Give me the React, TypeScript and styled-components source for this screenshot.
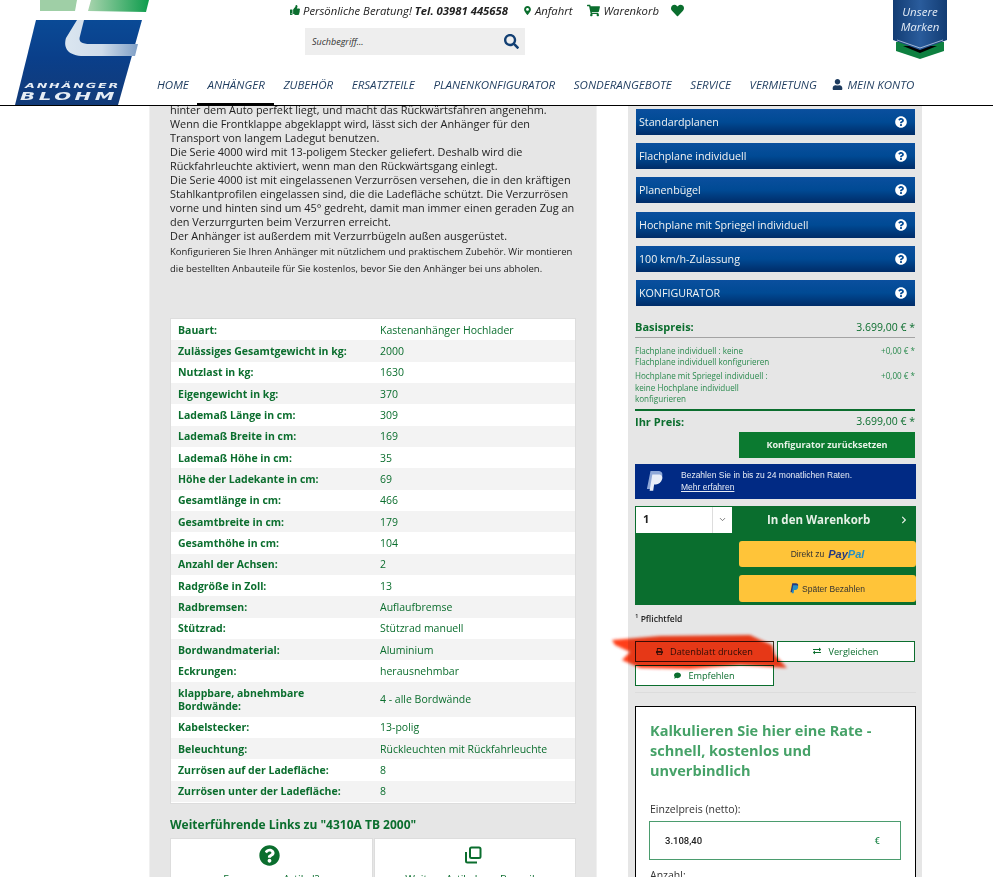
import React from "react";
import styled, { createGlobalStyle } from "styled-components";
import {
  FaChevronRight,
  FaComment,
  FaExchangeAlt,
  FaHeart,
  FaMapMarkerAlt,
  FaPrint,
  FaQuestionCircle,
  FaSearch,
  FaShoppingCart,
  FaThumbsUp,
  FaUser,
} from "react-icons/fa";
import { FiChevronDown } from "react-icons/fi";

const GREEN = "#0b6e2e";
const NAVY = "#1d3b5e";

const GlobalStyle = createGlobalStyle`
  html, body {
    margin: 0;
    padding: 0;
    background: #fff;
    font-family: "Open Sans", "Liberation Sans", sans-serif;
  }
  * { box-sizing: border-box; }
`;

const Page = styled.div`
  height: 877px;
  overflow: hidden;
`;

const Header = styled.header`
  position: relative;
  z-index: 2;
  display: flex;
  height: 106px;
  background: #fff;
  border-bottom: 1px solid #000;
`;

const LogoBox = styled.div`
  flex: 0 0 157px;
  height: 105px;
`;

const HeaderMain = styled.div`
  display: flex;
  flex-direction: column;
  flex: 1;
`;

const TopBar = styled.div`
  display: flex;
  align-items: center;
  height: 20px;
  margin-left: 133px;
  font-size: 11.3px;
  font-style: italic;
  color: #222;
  svg { color: ${GREEN}; }
`;

const TopItem = styled.span<{ $gap?: number }>`
  display: flex;
  align-items: center;
  gap: 3px;
  margin-right: ${(p) => p.$gap ?? 12}px;
  white-space: nowrap;
`;

const SearchBox = styled.div`
  display: flex;
  align-items: center;
  justify-content: space-between;
  width: 220px;
  height: 27px;
  margin: 8px 0 0 148px;
  padding: 0 6px 0 7px;
  background: #eee;
  font-size: 9px;
  font-style: italic;
  color: #333;
  svg { color: #123f73; }
`;

const Nav = styled.nav`
  display: flex;
  gap: 18.6px;
  height: 50px;
  align-items: stretch;
`;

const NavItem = styled.a<{ $active?: boolean }>`
  position: relative;
  display: flex;
  align-items: center;
  gap: 4px;
  height: 50px;
  padding-top: 8px;
  font-size: 11.55px;
  font-style: italic;
  color: ${NAVY};
  white-space: nowrap;
  &:last-child { margin-left: -3px; }
  ${(p) =>
    p.$active &&
    `&::after {
      content: "";
      position: absolute;
      left: -10px;
      right: -9px;
      bottom: 0;
      height: 2px;
      background: #000;
    }`}
`;

const Ribbon = styled.div`
  position: absolute;
  top: 0;
  left: 893px;
  width: 54px;
  height: 59px;
`;

const RibbonShape = styled.svg`
  position: absolute;
  inset: 0;
`;

const RibbonText = styled.div`
  position: relative;
  padding-top: 4px;
  color: #e4ecf6;
  font-size: 11.5px;
  font-style: italic;
  line-height: 15px;
  text-align: center;
`;

const Main = styled.main`
  display: flex;
  gap: 31px;
  margin: -3px 0 0 149px;
`;

const LeftPanel = styled.section`
  width: 448px;
  height: 780px;
  padding: 0 20px;
  background: #e6e6e6;
  border: 1px solid #f0f0f0;
  border-width: 0 1px;
`;

const Description = styled.p`
  margin: 0;
  font-size: 10.9px;
  line-height: 14px;
  color: #222;
  white-space: nowrap;
`;

const SmallNote = styled.p`
  margin: 0;
  font-size: 9.5px;
  line-height: 17px;
  color: #222;
  white-space: nowrap;
`;

const SpecTable = styled.div`
  margin-top: 41px;
  padding-bottom: 1px;
  background: #fff;
  border: 1px solid #ddd;
`;

const SpecRow = styled.div<{ $odd: boolean; $tall?: boolean }>`
  display: grid;
  grid-template-columns: 202px 1fr;
  align-items: center;
  height: ${(p) => (p.$tall ? "35px" : "21.33px")};
  padding: 1px 0 0 7px;
  background: ${(p) => (p.$odd ? "#f3f3f3" : "#fff")};
  font-size: 10.5px;
  line-height: 13px;
  color: ${GREEN};
`;

const SpecLabel = styled.span`
  max-width: 172px;
  font-weight: 700;
`;

const LinksTitle = styled.h3`
  margin: 13px 0 5px;
  font-size: 12px;
  line-height: 16px;
  font-weight: 700;
  color: ${GREEN};
`;

const LinkCards = styled.div`
  display: grid;
  grid-template-columns: 1fr 1fr;
  gap: 1px;
`;

const LinkCard = styled.div`
  display: flex;
  flex-direction: column;
  align-items: center;
  gap: 6px;
  height: 60px;
  padding-top: 6px;
  background: #fff;
  border: 1px solid #ddd;
  font-size: 10.5px;
  color: ${GREEN};
  white-space: nowrap;
`;

const CardIcon = styled.span`
  display: flex;
  align-items: center;
  height: 21px;
  padding-right: 4px;
  color: ${GREEN};
`;

const RightPanel = styled.aside`
  width: 294px;
  height: 780px;
  padding: 6px 6px 0 7px;
  background: #e6e6e6;
`;

const OptionList = styled.div`
  display: flex;
  flex-direction: column;
  gap: 8.2px;
  padding-left: 1px;
  margin-right: 1px;
`;

const OptionBar = styled.div`
  display: flex;
  align-items: center;
  justify-content: space-between;
  height: 26px;
  padding: 0 8px 0 3px;
  background: linear-gradient(#0a4f9e, #004a94 50%, #002c68);
  font-size: 10.7px;
  color: #f2f2f2;
  svg { color: #fff; }
`;

const PriceRow = styled.div<{ $ruled?: boolean }>`
  display: flex;
  justify-content: space-between;
  align-items: center;
  height: 21px;
  margin-right: 1px;
  font-size: 10.5px;
  color: ${GREEN};
  ${(p) => p.$ruled && "border-bottom: 1px solid #a3a3a3;"}
`;

const PriceBlock = styled.div`
  margin-top: 11px;
`;

const PriceLabel = styled.b`
  font-weight: 700;
  font-size: 11px;
`;

const ExtrasList = styled.div`
  display: flex;
  flex-direction: column;
  gap: 3px;
  margin-right: 1px;
  padding: 7px 0 5px;
  border-bottom: 2px solid ${GREEN};
`;

const ExtraRow = styled.div`
  display: flex;
  justify-content: space-between;
  font-size: 8.1px;
  line-height: 11.2px;
  color: #2a8a4e;
`;

const ExtraText = styled.span`
  width: 140px;
`;

const ResetRow = styled.div`
  display: flex;
  justify-content: flex-end;
`;

const ResetButton = styled.div`
  display: flex;
  align-items: center;
  justify-content: center;
  width: 176px;
  height: 26px;
  margin-right: 1px;
  background: #0b7a30;
  color: #e8f3e8;
  font-size: 9.1px;
  font-weight: 700;
`;

const PaypalBanner = styled.div`
  display: flex;
  align-items: center;
  height: 35px;
  margin-top: 6px;
  padding-left: 11px;
  gap: 17px;
  background: #012a84;
  color: #e8ecf5;
  font-family: "Liberation Sans", Arial, sans-serif;
  font-size: 8.5px;
  line-height: 12px;
`;

const BannerLink = styled.span`
  text-decoration: underline;
`;

const CartBox = styled.div`
  display: grid;
  grid-template-columns: 96px 1fr;
  height: 99px;
  margin-top: 7px;
  padding: 1px 0 3px 1px;
  background: #0a6e2e;
`;

const QtySelect = styled.div`
  display: flex;
  height: 26px;
  background: #fff;
  font-size: 11px;
  font-weight: 700;
  color: #222;
`;

const QtyValue = styled.span`
  flex: 1;
  padding: 4px 0 0 7px;
`;

const QtyArrow = styled.span`
  display: flex;
  align-items: center;
  justify-content: center;
  width: 20px;
  border-left: 1px solid #ddd;
  color: #555;
`;

const CartColumn = styled.div`
  display: flex;
  flex-direction: column;
`;

const CartTitle = styled.div`
  display: flex;
  align-items: center;
  justify-content: space-between;
  height: 26px;
  padding: 0 8px 0 35px;
  color: #e6f0e6;
  font-size: 11.5px;
  font-weight: 700;
`;

const YellowButton = styled.div`
  display: flex;
  align-items: center;
  justify-content: center;
  gap: 3px;
  width: 177px;
  height: 26.5px;
  margin: 8px 0 0 7px;
  background: #ffc439;
  border-radius: 3px;
  color: #333;
  font-family: "Liberation Sans", Arial, sans-serif;
  font-size: 8.5px;
`;

const PayWord = styled.span<{ $light?: boolean }>`
  font-size: 11px;
  font-weight: 700;
  font-style: italic;
  color: ${(p) => (p.$light ? "#2790c3" : "#253b80")};
`;

const Wordmark = styled.span`
  margin-left: 1px;
`;

const Footnote = styled.div`
  margin-top: 7px;
  height: 14px;
  font-size: 8.5px;
  font-weight: 600;
  line-height: 14px;
  color: #222;
  sup { font-size: 6px; line-height: 0; }
`;

const ActionGrid = styled.div`
  position: relative;
  display: grid;
  grid-template-columns: 139px 138px;
  gap: 3px;
  margin-top: 15px;
`;

const ActionButton = styled.div<{ $plain?: boolean }>`
  display: flex;
  align-items: center;
  justify-content: center;
  gap: 7px;
  height: 21px;
  border: 1px solid ${(p) => (p.$plain ? GREEN : "#3c2c1c")};
  background: ${(p) => (p.$plain ? "#fff" : "transparent")};
  font-size: 9.2px;
  color: ${(p) => (p.$plain ? GREEN : "#333")};
`;

const Scribble = styled.svg`
  position: absolute;
  top: -12px;
  left: -28px;
  width: 185px;
  height: 52px;
  mix-blend-mode: multiply;
  pointer-events: none;
`;

const Divider = styled.hr`
  margin: 6px 0 13px;
  border: 0;
  border-top: 1px solid #dcdcdc;
`;

const CalcBox = styled.div`
  height: 300px;
  padding: 14px 14px 0;
  background: #fff;
  border: 1px solid #000;
`;

const CalcTitle = styled.h2`
  margin: 0;
  font-size: 14.5px;
  line-height: 20px;
  font-weight: 700;
  color: #46a268;
`;

const FieldLabel = styled.label<{ $top: number }>`
  display: block;
  margin-top: ${(p) => p.$top}px;
  font-size: 10.5px;
  line-height: 14px;
  color: #333;
`;

const FieldInput = styled.div`
  display: flex;
  align-items: center;
  justify-content: space-between;
  width: 252px;
  height: 39px;
  margin: 5px 0 0 -1px;
  padding: 0 20px 0 15px;
  border: 1px solid #4b9c6e;
  font-family: Roboto, "Liberation Sans", sans-serif;
  font-size: 9.5px;
  font-weight: 500;
  color: #222;
`;

const Euro = styled.span`
  color: #2f8f57;
`;

const NAV_ITEMS = [
  "HOME",
  "ANHÄNGER",
  "ZUBEHÖR",
  "ERSATZTEILE",
  "PLANENKONFIGURATOR",
  "SONDERANGEBOTE",
  "SERVICE",
  "VERMIETUNG",
];

const OPTIONS = [
  "Standardplanen",
  "Flachplane individuell",
  "Planenbügel",
  "Hochplane mit Spriegel individuell",
  "100 km/h-Zulassung",
  "KONFIGURATOR",
];

const SPECS: [string, string][] = [
  ["Bauart:", "Kastenanhänger Hochlader"],
  ["Zulässiges Gesamtgewicht in kg:", "2000"],
  ["Nutzlast in kg:", "1630"],
  ["Eigengewicht in kg:", "370"],
  ["Lademaß Länge in cm:", "309"],
  ["Lademaß Breite in cm:", "169"],
  ["Lademaß Höhe in cm:", "35"],
  ["Höhe der Ladekante in cm:", "69"],
  ["Gesamtlänge in cm:", "466"],
  ["Gesamtbreite in cm:", "179"],
  ["Gesamthöhe in cm:", "104"],
  ["Anzahl der Achsen:", "2"],
  ["Radgröße in Zoll:", "13"],
  ["Radbremsen:", "Auflaufbremse"],
  ["Stützrad:", "Stützrad manuell"],
  ["Bordwandmaterial:", "Aluminium"],
  ["Eckrungen:", "herausnehmbar"],
  ["klappbare, abnehmbare Bordwände:", "4 - alle Bordwände"],
  ["Kabelstecker:", "13-polig"],
  ["Beleuchtung:", "Rückleuchten mit Rückfahrleuchte"],
  ["Zurrösen auf der Ladefläche:", "8"],
  ["Zurrösen unter der Ladefläche:", "8"],
];

const Logo = () => (
  <svg width="157" height="105" viewBox="0 0 157 105">
    <defs>
      <linearGradient id="logoBlue" x1="0" y1="0" x2="0" y2="1">
        <stop offset="0" stopColor="#0a4a96" />
        <stop offset="0.45" stopColor="#0a3f8a" />
        <stop offset="1" stopColor="#123a78" />
      </linearGradient>
      <linearGradient id="logoGreen" x1="0" y1="0" x2="1" y2="0">
        <stop offset="0" stopColor="#a9d4ae" />
        <stop offset="1" stopColor="#0d9c4c" />
      </linearGradient>
      <linearGradient id="logoBand" x1="0" y1="0" x2="1" y2="0">
        <stop offset="0" stopColor="#dbe6f0" />
        <stop offset="0.5" stopColor="#cfdcea" />
        <stop offset="1" stopColor="#7f9fc6" />
      </linearGradient>
    </defs>
    <polygon points="40,0 77,0 75,11 40,11" fill="#9fcfa6" />
    <polygon points="91,0 149,0 146,12 88,11" fill="url(#logoGreen)" />
    <polygon points="36,20 142,20 118,105 15,105" fill="url(#logoBlue)" />
    <path d="M77 20 H84 L80 36 C78 42 82 44 90 44 H138 L135 56 H84 C68 56 63 48 66 38 Z" fill="url(#logoBand)" />
    <text
      x="25"
      y="88"
      textLength="95"
      lengthAdjust="spacingAndGlyphs"
      fontFamily="'DejaVu Sans', sans-serif"
      fontSize="7"
      fontWeight="700"
      fontStyle="italic"
      letterSpacing="1"
      fill="#e6edf5"
    >
      ANHÄNGER
    </text>
    <text
      x="20"
      y="100"
      textLength="98"
      lengthAdjust="spacingAndGlyphs"
      fontFamily="'DejaVu Sans', sans-serif"
      fontSize="11"
      fontWeight="700"
      fontStyle="italic"
      letterSpacing="2"
      fill="#e6edf5"
    >
      BLOHM
    </text>
  </svg>
);

const RibbonArt = () => (
  <RibbonShape width="54" height="59" viewBox="0 0 54 59">
    <defs>
      <linearGradient id="ribbonBlue" x1="0" y1="0" x2="1" y2="0">
        <stop offset="0" stopColor="#123c73" />
        <stop offset="0.5" stopColor="#2a5c9c" />
        <stop offset="1" stopColor="#123c73" />
      </linearGradient>
    </defs>
    <polygon points="3,42 51,42 51,51 27,59 3,51" fill="#0e8040" />
    <polygon points="10,46 44,46 27,53" fill="#000" />
    <polygon points="0,0 54,0 54,40 27,50 0,40" fill="url(#ribbonBlue)" />
    <path d="M4 40 L27 48 L50 40" fill="none" stroke="#d8e3f0" strokeWidth="0.7" />
  </RibbonShape>
);

const PaypalMark = ({ size }: { size: number }) => (
  <svg width={size} height={size * 1.15} viewBox="0 0 20 23">
    <path d="M5 0h8c4 0 6 2 5 6-1 5-4 7-8 7H7l-1 7H1z" fill="#8fa8d8" />
    <path d="M7 4h7c3 0 5 2 4 5-1 4-4 6-7 6H9l-1 7H4z" fill="#e9eef8" />
  </svg>
);

const CopyIcon = () => (
  <svg width="18" height="18" viewBox="0 0 18 18" fill="none" stroke="currentColor" strokeWidth="2">
    <rect x="6" y="1.5" width="10.5" height="10.5" rx="1.5" />
    <path d="M2 6v9a1.5 1.5 0 0 0 1.5 1.5H13" />
  </svg>
);

export default function App() {
  return (
    <Page>
      <GlobalStyle />
      <Header>
        <LogoBox>
          <Logo />
        </LogoBox>
        <HeaderMain>
          <TopBar>
            <TopItem $gap={15}>
              <FaThumbsUp size={10} />
              <span>
                Persönliche Beratung! <b>Tel. 03981 445658</b>
              </span>
            </TopItem>
            <TopItem $gap={15}>
              <FaMapMarkerAlt size={9} />
              <span>Anfahrt</span>
            </TopItem>
            <TopItem>
              <FaShoppingCart size={13} />
              <span>Warenkorb</span>
            </TopItem>
            <TopItem>
              <FaHeart size={13} />
            </TopItem>
          </TopBar>
          <SearchBox>
            <span>Suchbegriff...</span>
            <FaSearch size={15} />
          </SearchBox>
          <Nav>
            {NAV_ITEMS.map((item) => (
              <NavItem key={item} $active={item === "ANHÄNGER"}>
                {item}
              </NavItem>
            ))}
            <NavItem>
              <FaUser size={11} />
              MEIN KONTO
            </NavItem>
          </Nav>
        </HeaderMain>
        <Ribbon>
          <RibbonArt />
          <RibbonText>
            Unsere
            <br />
            Marken
          </RibbonText>
        </Ribbon>
      </Header>
      <Main>
        <LeftPanel>
          <Description>
            hinter dem Auto perfekt liegt, und macht das Rückwärtsfahren angenehm.
            <br />
            Wenn die Frontklappe abgeklappt wird, lässt sich der Anhänger für den
            <br />
            Transport von langem Ladegut benutzen.
            <br />
            Die Serie 4000 wird mit 13-poligem Stecker geliefert. Deshalb wird die
            <br />
            Rückfahrleuchte aktiviert, wenn man den Rückwärtsgang einlegt.
            <br />
            Die Serie 4000 ist mit eingelassenen Verzurrösen versehen, die in den kräftigen
            <br />
            Stahlkantprofilen eingelassen sind, die die Ladefläche schützt. Die Verzurrösen
            <br />
            vorne und hinten sind um 45° gedreht, damit man immer einen geraden Zug an
            <br />
            den Verzurrgurten beim Verzurren erreicht.
            <br />
            Der Anhänger ist außerdem mit Verzurrbügeln außen ausgerüstet.
          </Description>
          <SmallNote>
            Konfigurieren Sie Ihren Anhänger mit nützlichem und praktischem Zubehör. Wir montieren
            <br />
            die bestellten Anbauteile für Sie kostenlos, bevor Sie den Anhänger bei uns abholen.
          </SmallNote>
          <SpecTable>
            {SPECS.map(([label, value], i) => (
              <SpecRow key={label} $odd={i % 2 === 1} $tall={label.length > 31}>
                <SpecLabel>{label}</SpecLabel>
                <span>{value}</span>
              </SpecRow>
            ))}
          </SpecTable>
          <LinksTitle>Weiterführende Links zu "4310A TB 2000"</LinksTitle>
          <LinkCards>
            <LinkCard>
              <CardIcon>
                <FaQuestionCircle size={21} />
              </CardIcon>
              <span>Fragen zum Artikel?</span>
            </LinkCard>
            <LinkCard>
              <CardIcon>
                <CopyIcon />
              </CardIcon>
              <span>Weitere Artikel aus Baureihe</span>
            </LinkCard>
          </LinkCards>
        </LeftPanel>
        <RightPanel>
          <OptionList>
            {OPTIONS.map((option) => (
              <OptionBar key={option}>
                {option}
                <FaQuestionCircle size={12} />
              </OptionBar>
            ))}
          </OptionList>
          <PriceBlock>
            <PriceRow $ruled>
              <PriceLabel>Basispreis:</PriceLabel>
              <span>3.699,00 € *</span>
            </PriceRow>
            <ExtrasList>
              <ExtraRow>
                <ExtraText>Flachplane individuell : keine Flachplane individuell konfigurieren</ExtraText>
                <span>+0,00 € *</span>
              </ExtraRow>
              <ExtraRow>
                <ExtraText>Hochplane mit Spriegel individuell : keine Hochplane individuell konfigurieren</ExtraText>
                <span>+0,00 € *</span>
              </ExtraRow>
            </ExtrasList>
            <PriceRow>
              <PriceLabel>Ihr Preis:</PriceLabel>
              <span>3.699,00 € *</span>
            </PriceRow>
          </PriceBlock>
          <ResetRow>
            <ResetButton>Konfigurator zurücksetzen</ResetButton>
          </ResetRow>
          <PaypalBanner>
            <PaypalMark size={18} />
            <div>
              Bezahlen Sie in bis zu 24 monatlichen Raten.
              <br />
              <BannerLink>Mehr erfahren</BannerLink>
            </div>
          </PaypalBanner>
          <CartBox>
            <QtySelect>
              <QtyValue>1</QtyValue>
              <QtyArrow>
                <FiChevronDown size={9} />
              </QtyArrow>
            </QtySelect>
            <CartColumn>
              <CartTitle>
                In den Warenkorb
                <FaChevronRight size={8} />
              </CartTitle>
              <YellowButton>
                Direkt zu
                <Wordmark>
                  <PayWord>Pay</PayWord>
                  <PayWord $light>Pal</PayWord>
                </Wordmark>
              </YellowButton>
              <YellowButton>
                <svg width="9" height="11" viewBox="0 0 20 23">
                  <path d="M5 0h8c4 0 6 2 5 6-1 5-4 7-8 7H7l-1 7H1z" fill="#253b80" />
                  <path d="M7 4h7c3 0 5 2 4 5-1 4-4 6-7 6H9l-1 7H4z" fill="#2790c3" />
                </svg>
                Später Bezahlen
              </YellowButton>
            </CartColumn>
          </CartBox>
          <Footnote>
            <sup>1</sup> Pflichtfeld
          </Footnote>
          <ActionGrid>
            <ActionButton>
              <FaPrint size={7} />
              Datenblatt drucken
            </ActionButton>
            <ActionButton $plain>
              <FaExchangeAlt size={8} />
              Vergleichen
            </ActionButton>
            <ActionButton $plain>
              <FaComment size={7} />
              Empfehlen
            </ActionButton>
            <Scribble viewBox="0 0 185 52">
              <defs>
                <filter id="scribbleBlur" x="-10%" y="-30%" width="120%" height="160%">
                  <feGaussianBlur stdDeviation="1.6" />
                </filter>
              </defs>
              <polygon
                points="5,11 53,7 143,6 165,16 168,26 180,39 133,36 83,40 33,39 15,31 23,23 8,16"
                fill="#ff2a00"
                opacity="0.9"
                filter="url(#scribbleBlur)"
              />
            </Scribble>
          </ActionGrid>
          <Divider />
          <CalcBox>
            <CalcTitle>
              Kalkulieren Sie hier eine Rate -
              <br />
              schnell, kostenlos und
              <br />
              unverbindlich
            </CalcTitle>
            <FieldLabel $top={21}>Einzelpreis (netto):</FieldLabel>
            <FieldInput>
              <span>3.108,40</span>
              <Euro>€</Euro>
            </FieldInput>
            <FieldLabel $top={8}>Anzahl:</FieldLabel>
          </CalcBox>
        </RightPanel>
      </Main>
    </Page>
  );
}
